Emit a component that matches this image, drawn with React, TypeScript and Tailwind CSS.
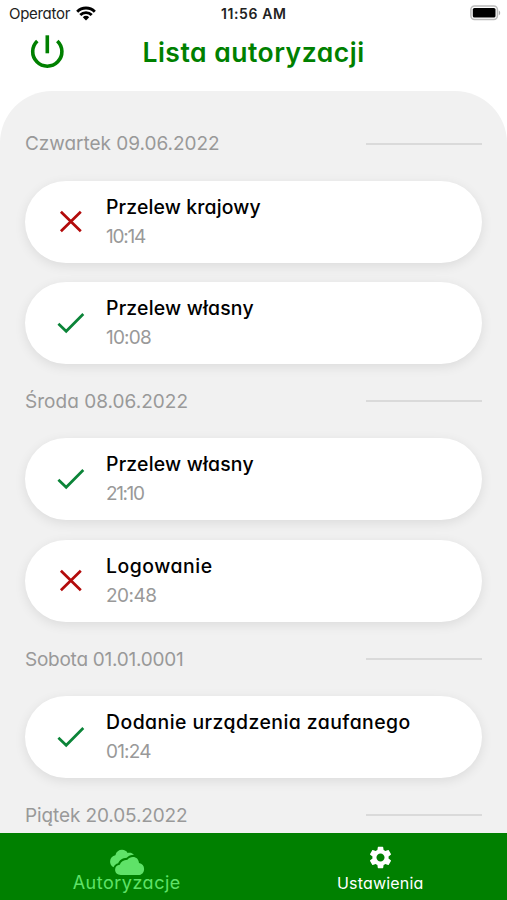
import React from 'react';
import { MdSettings } from 'react-icons/md';

type Entry = { title: string; time: string; accepted: boolean; titleClass: string; timeClass: string };
type Day = { label: string; labelClass: string; entries: Entry[] };

const days: Day[] = [
  {
    label: 'Czwartek 09.06.2022',
    labelClass: 'tracking-[-0.03px]',
    entries: [
      { title: 'Przelew krajowy', time: '10:14', accepted: false, titleClass: 'tracking-[0.15px]', timeClass: 'tracking-[-1.2px]' },
      { title: 'Przelew własny', time: '10:08', accepted: true, titleClass: 'tracking-[0.2px]', timeClass: 'tracking-[-0.8px]' },
    ],
  },
  {
    label: 'Środa 08.06.2022',
    labelClass: 'tracking-[0.02px]',
    entries: [
      { title: 'Przelew własny', time: '21:10', accepted: true, titleClass: 'tracking-[0.2px]', timeClass: 'tracking-[-1.4px]' },
      { title: 'Logowanie', time: '20:48', accepted: false, titleClass: 'tracking-[0.55px]', timeClass: 'tracking-[-0.5px]' },
    ],
  },
  {
    label: 'Sobota 01.01.0001',
    labelClass: 'tracking-[-0.25px]',
    entries: [
      { title: 'Dodanie urządzenia zaufanego', time: '01:24', accepted: true, titleClass: 'tracking-[0.46px]', timeClass: 'tracking-[-0.8px]' },
    ],
  },
  { label: 'Piątek 20.05.2022', labelClass: 'tracking-[-0.12px]', entries: [] },
];

const StatusBar: React.FC = () => (
  <div className="relative flex h-7 items-center justify-between pl-[9px] pr-[6px] text-[15px] text-[#222]">
    <div className="flex items-center gap-[6px]">
      <span className="tracking-[-0.3px]">Operator</span>
      <svg width="20" height="15" viewBox="0 0 20 15" fill="none" stroke="#000" strokeWidth="2.9" className="-mt-[2px]">
        <path d="M1.2 5.7a12.4 12.4 0 0 1 17.6 0" />
        <path d="M4.3 9a8 8 0 0 1 11.4 0" />
        <path d="M10 14.4 6.8 11.2a4.5 4.5 0 0 1 6.4 0z" fill="#000" stroke="none" />
      </svg>
    </div>
    <span className="absolute left-[221px] top-[3px] whitespace-nowrap text-[14px] leading-[22px] font-semibold tracking-[0.6px]">
      11:56 AM
    </span>
    <svg width="31" height="16" viewBox="0 0 31 16" className="-mt-[2px]">
      <rect x="0.9" y="1" width="26.5" height="13.4" rx="3.6" fill="#fff" stroke="#bbb" strokeWidth="1.5" />
      <rect x="2.8" y="2.9" width="22.7" height="9.6" rx="1.6" fill="#000" />
      <path d="M28.8 5.4v4.8c1.9-.8 1.9-4 0-4.8z" fill="#aaa" />
    </svg>
  </div>
);

const StatusIcon: React.FC<{ accepted: boolean }> = ({ accepted }) => (
  <svg width="30" height="26" viewBox="0 0 30 26" fill="none" strokeWidth="2.7" className="-mt-[2px]">
    {accepted ? (
      <path d="M2.4 14.8 10.2 22.3 27.3 5" stroke="#0b8438" />
    ) : (
      <path d="M4.9 3.7 24.8 23.3M24.8 3.7 4.9 23.3" stroke="#b30b0b" />
    )}
  </svg>
);

const EntryCard: React.FC<{ entry: Entry }> = ({ entry }) => (
  <div className="flex h-[82px] items-center rounded-full bg-white pl-[31px] shadow-[0_3px_12px_rgba(0,0,0,0.09)]">
    <StatusIcon accepted={entry.accepted} />
    <div className="ml-[20px] whitespace-nowrap text-[19px] leading-[30px]">
      <div className={`text-[19.4px] font-medium text-black ${entry.titleClass}`}>{entry.title}</div>
      <div className={`text-[#999] ${entry.timeClass}`}>{entry.time}</div>
    </div>
  </div>
);

const App: React.FC = () => {
  return (
    <div className="flex h-[900px] w-[507px] flex-col overflow-hidden bg-white font-['Inter',sans-serif] [font-feature-settings:'cv11']">
      <StatusBar />
      <header className="grid h-[63px] shrink-0 grid-cols-[76px_1fr_76px] items-start">
        <button className="ml-[29px] mt-[6px] w-9">
          <svg width="36" height="36" viewBox="0 0 36 36" fill="none" stroke="#008000" strokeWidth="3.6">
            <path d="M18.3 1.3v18" />
            <path d="M8.3 7a14.6 14.6 0 1 0 20 0" />
          </svg>
        </button>
        <h1 className="mt-[5px] whitespace-nowrap text-center text-[26.5px] leading-[38px] font-semibold tracking-[0.5px] text-[#008000]">
          Lista autoryzacji
        </h1>
      </header>

      <main className="min-h-0 flex-1 overflow-hidden rounded-t-[52px] bg-[#f1f1f1] px-[25px] pt-[15.4px]">
        {days.map((day) => (
          <section key={day.label}>
            <div className="flex h-[74.3px] items-center justify-between">
              <h2 className={`mt-[2px] whitespace-nowrap text-[19px] text-[#999] ${day.labelClass}`}>{day.label}</h2>
              <div className="h-[2px] w-[116px] bg-[#dadada]" />
            </div>
            <div className="flex flex-col gap-[19.5px]">
              {day.entries.map((entry) => (
                <EntryCard key={entry.title} entry={entry} />
              ))}
            </div>
          </section>
        ))}
      </main>

      <nav className="grid h-[67px] shrink-0 grid-cols-2 bg-[#008000]">
        <button className="flex flex-col items-center pt-[16px] text-[#5fe268]">
          <svg width="36" height="27" viewBox="0 0 36 27" fill="currentColor">
            {/* rear cloud, cut off along the edge of the front one */}
            <path d="M4.6 18.2C2.1 17 .9 14.8 1.1 12.2 1.3 9 3.4 6.6 6.4 6.2 7.2 2.8 9.8.8 13 .8c2.6 0 4.6 1.3 5.6 3.1 2.4-.5 4.8 0 6.4 1.9-3.2 0-5.6 1-7.2 2.9-4.5.2-7.6 2.4-8.6 5.6-2.3.6-3.9 1.9-4.6 3.9z" />
            <path d="M11.8 26c-3.5 0-5.7-2.3-5.7-5.2 0-2.7 1.8-4.7 4.7-5 .9-3.2 3.6-5 7.6-5.1 1.4-1.7 3.4-2.6 5.5-2.6 3.6 0 5.7 2.2 6.1 5.8 3.2.5 5.1 2.8 5.1 6 0 3.6-2.4 6.1-5.8 6.1z" />
          </svg>
          <span className="-mt-[4px] whitespace-nowrap text-[18px] leading-[22px] tracking-[0.5px]">Autoryzacje</span>
        </button>
        <button className="flex flex-col items-center pt-[11px] text-white">
          <MdSettings size={27} />
          <span className="mt-[1px] whitespace-nowrap text-[16px] leading-[22px] tracking-[0.2px]">Ustawienia</span>
        </button>
      </nav>
    </div>
  );
};

export default App;
